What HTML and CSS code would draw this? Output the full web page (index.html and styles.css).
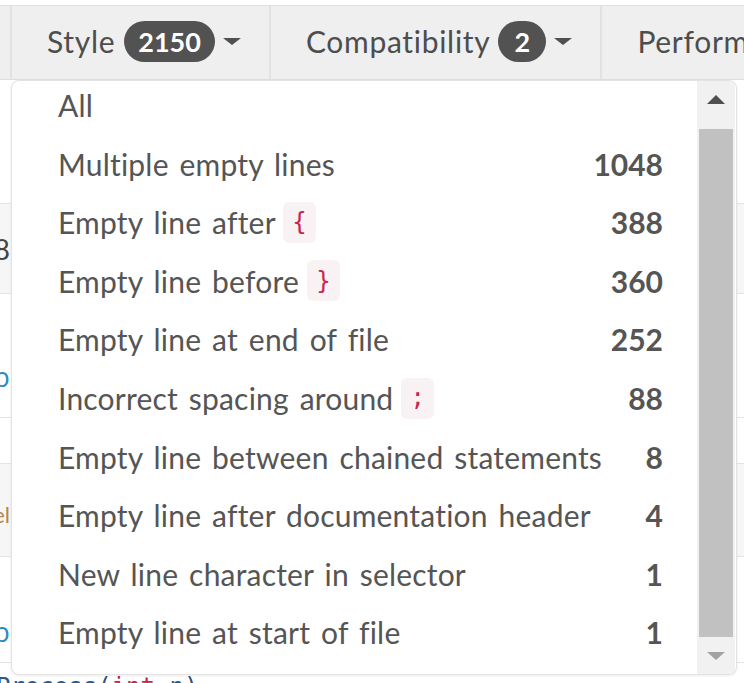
FILE: index.html
```html
<!DOCTYPE html>
<html>
<head>
<meta charset="utf-8">
<link rel="stylesheet" href="styles.css">
</head>
<body>
<div class="page">
  <div class="topbar">
    <div class="tab stub"></div>
    <div class="tab">
      <span class="tab-label">Style</span>
      <span class="badge">2150</span>
      <span class="caret"></span>
    </div>
    <div class="tab">
      <span class="tab-label">Compatibility</span>
      <span class="badge round">2</span>
      <span class="caret"></span>
    </div>
    <div class="tab last">
      <span class="tab-label">Performance</span>
    </div>
  </div>

  <div class="table">
    <div class="trow h1"><div class="cell"></div></div>
    <div class="trow h2 shade"><div class="cell"><span class="num">38</span></div></div>
    <div class="trow h3"><div class="cell"><span class="link">sub</span></div></div>
    <div class="trow h4"><div class="cell"></div></div>
    <div class="trow h5 shade"><div class="cell"><span class="orange">el</span></div></div>
    <div class="trow h6"><div class="cell"><span class="link">sub</span></div></div>
    <div class="trow h7"><div class="code"><span class="fn">Process</span>(<span class="kw">int</span> <span class="fn">n</span>)</div></div>
  </div>

  <div class="dropdown">
    <ul class="menu">
      <li class="item"><span class="label">All</span></li>
      <li class="item"><span class="label">Multiple empty lines</span><span class="count">1048</span></li>
      <li class="item"><span class="label">Empty line after <code class="tok">{</code></span><span class="count">388</span></li>
      <li class="item"><span class="label">Empty line before <code class="tok">}</code></span><span class="count">360</span></li>
      <li class="item"><span class="label">Empty line at end of file</span><span class="count">252</span></li>
      <li class="item"><span class="label">Incorrect spacing around <code class="tok">;</code></span><span class="count">88</span></li>
      <li class="item"><span class="label">Empty line between chained statements</span><span class="count">8</span></li>
      <li class="item"><span class="label">Empty line after documentation header</span><span class="count">4</span></li>
      <li class="item"><span class="label">New line character in selector</span><span class="count">1</span></li>
      <li class="item"><span class="label">Empty line at start of file</span><span class="count">1</span></li>
    </ul>
    <div class="scrollbar">
      <div class="arrow up"></div>
      <div class="thumb"></div>
      <div class="arrow down"></div>
    </div>
  </div>
</div>
</body>
</html>
```

FILE: styles.css
```css
* { box-sizing: border-box; }
html, body { margin: 0; padding: 0; background: #fff; }
body {
  font-family: "Lato", "Open Sans", sans-serif;
  color: #555;
  width: 744px;
  height: 683px;
  overflow: hidden;
}
.page { position: relative; width: 744px; height: 683px; overflow: hidden; }

.topbar {
  margin-top: 5px;
  height: 75px;
  background: #efefef;
  border-top: 1px solid #e0e0e0;
  border-bottom: 1px solid #dedede;
  display: flex;
  align-items: stretch;
  white-space: nowrap;
}
.tab {
  display: flex;
  align-items: center;
  padding: 0 28px 3px 35px;
  border-right: 2px solid #e2e2e2;
  font-size: 30px;
  letter-spacing: 0.7px;
  flex: none;
}
.tab.stub { width: 12px; padding: 0; }
.tab.last { border-right: none; padding-right: 0; }
.tab-label { color: #4d4d4d; }
.badge {
  margin-left: 9px;
  height: 41px;
  padding: 0 14px;
  border-radius: 21px;
  background: #525252;
  color: #fff;
  font-weight: 700;
  font-size: 27px;
  letter-spacing: 0;
  display: inline-flex;
  align-items: center;
  justify-content: center;
}
.badge.round { padding: 0; width: 48px; margin-left: 8px; }
.caret {
  margin-left: 8px;
  width: 0; height: 0;
  border-left: 9px solid transparent;
  border-right: 9px solid transparent;
  border-top: 7px solid #505050;
}

.table { display: flex; flex-direction: column; }
.trow { border-bottom: 1px solid #e4e4e4; display: flex; }
.trow.shade { background: #f6f6f6; }
.h1 { height: 124px; }
.h2 { height: 90px; }
.h3 { height: 124px; }
.h4 { height: 46px; }
.h5 { height: 93px; }
.h6 { height: 106px; }
.h7 { height: 40px; border-bottom: none; }
.cell {
  width: 10px;
  overflow: hidden;
  display: flex;
  justify-content: flex-end;
  align-items: center;
  white-space: nowrap;
  font-size: 28px;
}
.h3 .cell { align-items: flex-end; padding-bottom: 22px; }
.h6 .cell { align-items: flex-end; padding-bottom: 12px; }
.h5 .cell { padding-top: 8px; }
.num { color: #444; }
.link { color: #2a8bc5; font-family: "Open Sans", sans-serif; font-size: 28px; }
.orange { color: #b7844a; font-size: 22px; }
.code {
  font-family: "DejaVu Sans Mono", monospace;
  font-size: 24px;
  color: #2b4d78;
  padding: 10px 0 0 0;
  margin-left: -4px;
  white-space: nowrap;
}
.code .kw { color: #c7254e; }
.code .fn { color: #2b5a8c; }

.dropdown {
  position: absolute;
  left: 11px;
  top: 80px;
  width: 726px;
  height: 595px;
  background: #fff;
  border: 1px solid #e3e3e3;
  border-radius: 8px;
  box-shadow: 0 1px 3px rgba(0,0,0,0.08);
  display: flex;
  overflow: hidden;
}
.menu {
  list-style: none;
  margin: -5px 0 0 0;
  padding: 0 34px 0 46px;
  flex: 1;
}
.item {
  height: 58.56px;
  display: flex;
  align-items: center;
  justify-content: space-between;
  font-size: 30px;
  letter-spacing: 0.2px;
  word-spacing: 3px;
  color: #555;
  white-space: nowrap;
}
.label { display: flex; align-items: center; white-space: pre; }
.count { font-weight: 700; color: #555; letter-spacing: 0; }
.tok {
  display: inline-flex;
  align-items: center;
  justify-content: center;
  height: 41px;
  width: 33px;
  margin-left: -3px;
  border-radius: 6px;
  background: #f9f2f4;
  color: #c7254e;
  font-family: "DejaVu Sans Mono", monospace;
  font-size: 24px;
  letter-spacing: 0;
}

.scrollbar {
  width: 38px;
  flex: none;
  background: #f1f1f1;
  display: flex;
  flex-direction: column;
  align-items: center;
  padding-bottom: 14px;
  margin-right: 1px;
}
.arrow {
  width: 0; height: 0;
  border-left: 9px solid transparent;
  border-right: 9px solid transparent;
}
.arrow.up { border-bottom: 9px solid #505050; margin-top: 14px; margin-bottom: 25px; }
.arrow.down { border-top: 8px solid #a3a3a3; margin-top: 15px; }
.thumb { width: 34px; flex: 1; background: #c1c1c1; }
```
